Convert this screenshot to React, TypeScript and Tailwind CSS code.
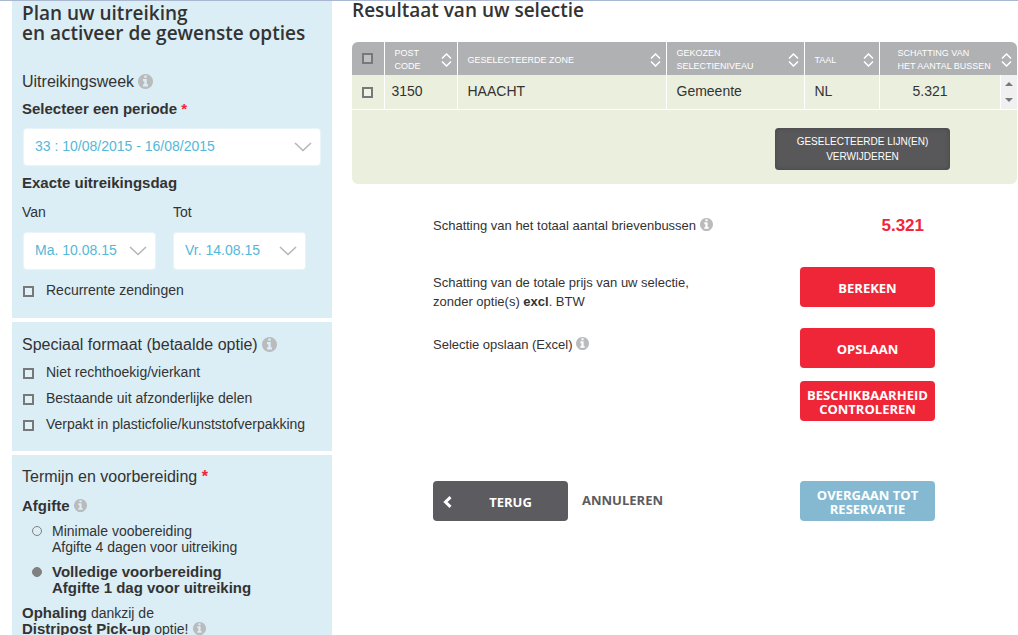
import { useState } from "react"
import type { ReactNode } from "react"

const checkboxClass = "appearance-none shrink-0 size-[11px] border-2 border-[#77787a] bg-white/20 checked:bg-[#77787a]"

const columns = [
  { label: ["POST", "CODE"], className: "w-[73px] pl-[10px]" },
  { label: ["GESELECTEERDE ZONE"], className: "pl-[10px]" },
  { label: ["GEKOZEN", "SELECTIENIVEAU"], className: "w-[138px] pl-[10px]" },
  { label: ["TAAL"], className: "w-[75px] pl-[10px]" },
  { label: ["SCHATTING VAN", "HET AANTAL BUSSEN"], className: "w-[138px] pl-[18px]" },
]

const formats = [
  "Niet rechthoekig/vierkant",
  "Bestaande uit afzonderlijke delen",
  "Verpakt in plasticfolie/kunststofverpakking",
]

const Info = ({ large = false }: { large?: boolean }) => (
  <svg viewBox="0 0 1536 1536" fill="currentColor" className={`mb-[2px] shrink-0 text-[#b9bbbd] ${large ? "size-[15px]" : "size-[13px]"}`}>
    <path d="M1024 1248v-160q0-14-9-23t-23-9h-96v-512q0-14-9-23t-23-9h-320q-14 0-23 9t-9 23v160q0 14 9 23t23 9h96v320h-96q-14 0-23 9t-9 23v160q0 14 9 23t23 9h448q14 0 23-9t9-23zm-128-896v-160q0-14-9-23t-23-9h-192q-14 0-23 9t-9 23v160q0 14 9 23t23 9h192q14 0 23-9t9-23zm640 416q0 209-103 385.5t-279.5 279.5-385.5 103-385.5-103-279.5-279.5-103-385.5 103-385.5 279.5-279.5 385.5-103 385.5 103 279.5 279.5 103 385.5z" />
  </svg>
)

const SortIcon = () => (
  <svg viewBox="0 0 11 14" className="w-[11px] h-[14px] shrink-0" fill="none" stroke="white" strokeWidth="1.5">
    <path d="M1 5.5 5.5 1 10 5.5M1 8.5 5.5 13 10 8.5" />
  </svg>
)

const Dropdown = ({ id, value, className }: { id: string, value: string, className: string }) => (
  <div className={`relative ${className}`}>
    <select id={id} className="appearance-none block w-full h-[38px] rounded-[3px] border border-[#e8f4f9] bg-white bg-clip-padding pl-[11px] pr-8 pb-[3px] text-[14px] text-[#54b8d8] outline-none">
      <option>{value}</option>
    </select>
    <svg viewBox="0 0 18 10" className="absolute right-[9px] top-[14px] w-[18px] h-[10px] pointer-events-none" fill="none" stroke="#b5b6b8" strokeWidth="1.6">
      <path d="M1 1 9 8.5 17 1" />
    </svg>
  </div>
)

const Check = ({ label }: { label: string }) => (
  <label className="flex items-center gap-3 h-[22px] pl-px text-[14px]">
    <input type="checkbox" className={`${checkboxClass} mt-[3px]`} />
    {label}
  </label>
)

const ActionButton = ({ children, className = "bg-[#ef2637]" }: { children: ReactNode, className?: string }) => (
  <button className={`w-[135px] h-10 rounded-[4px] pt-px font-['Open_Sans',sans-serif] text-[13px] leading-[14px] font-bold text-white ${className}`}>
    {children}
  </button>
)

const App = () => {
  const [prep, setPrep] = useState("full")

  return (
    <main className="flex h-screen overflow-hidden border-t border-[#a9b8d0] bg-white pl-3 font-['Liberation_Sans',Arial,sans-serif] text-[#333]">
      <aside className="w-[320px] shrink-0 leading-[22px]">
        <section className="bg-[#dbedf5] pl-[10px] pr-[11px] pt-[2px] pb-[17px]">
          <h2 className="font-['Open_Sans',sans-serif] text-[19px] leading-5 font-semibold whitespace-nowrap">
            Plan uw uitreiking<br />en activeer de gewenste opties
          </h2>
          <h3 className="mt-7 flex items-center gap-1 text-[16px] leading-[22px]">Uitreikingsweek <Info large /></h3>
          <label htmlFor="period" className="mt-[5px] block text-[15px] font-bold">
            Selecteer een periode <span className="text-[#ef2637]">*</span>
          </label>
          <Dropdown id="period" value="33 : 10/08/2015 - 16/08/2015" className="mt-2 ml-px" />
          <h4 className="mt-[6px] text-[15px] leading-[22px] font-bold">Exacte uitreikingsdag</h4>
          <div className="mt-[7px] flex gap-[17px] text-[14px]">
            <div>
              <label htmlFor="from" className="mb-[9px] block">Van</label>
              <Dropdown id="from" value="Ma. 10.08.15" className="w-[133px] ml-px" />
            </div>
            <div>
              <label htmlFor="to" className="mb-[9px] block">Tot</label>
              <Dropdown id="to" value="Vr. 14.08.15" className="w-[133px]" />
            </div>
          </div>
          <div className="mt-[9px]">
            <Check label="Recurrente zendingen" />
          </div>
        </section>

        <section className="mt-1 bg-[#dbedf5] px-[10px] pt-3 pb-4">
          <h3 className="flex items-center gap-1 text-[16px] leading-[22px]">Speciaal formaat (betaalde optie) <Info large /></h3>
          <div className="mt-[5px] flex flex-col gap-1">
            {formats.map(label => <Check key={label} label={label} />)}
          </div>
        </section>

        <section className="mt-1 bg-[#dbedf5] px-[10px] pt-[11px] pb-10">
          <h3 className="text-[16px] leading-[22px]">
            Termijn en voorbereiding <span className="font-bold text-[#ef2637]">*</span>
          </h3>
          <h4 className="mt-[7px] flex items-center gap-1 text-[15px] leading-[22px] font-bold">Afgifte <Info /></h4>
          <div className="mt-[6px] flex flex-col gap-[9px] pl-[10px] text-[14px] leading-4">
            <label className="flex gap-[10px]">
              <input type="radio" name="prep" checked={prep === "minimal"} onChange={() => setPrep("minimal")} className="appearance-none mt-[3px] size-[10px] rounded-full border border-[#808080] checked:bg-[#808080]" />
              <span>Minimale voobereiding<br />Afgifte 4 dagen voor uitreiking</span>
            </label>
            <label className="flex gap-[10px] text-[15px] font-bold">
              <input type="radio" name="prep" checked={prep === "full"} onChange={() => setPrep("full")} className="appearance-none mt-[3px] size-[10px] rounded-full border border-[#808080] checked:bg-[#808080]" />
              <span>Volledige voorbereiding<br />Afgifte 1 dag voor uitreiking</span>
            </label>
          </div>
          <p className="mt-[9px] text-[14px] leading-4">
            <b className="text-[15px]">Ophaling</b> dankzij de<br />
            <span className="flex items-center gap-1"><span><b className="text-[15px]">Distripost Pick-up</b> optie!</span> <Info /></span>
          </p>
        </section>
      </aside>

      <div className="ml-5 min-w-0 flex-1 pr-px">
        <h2 className="font-['Open_Sans',sans-serif] text-[19px] leading-[18px] font-semibold">Resultaat van uw selectie</h2>

        <div className="mt-[23px] overflow-hidden rounded-[6px] bg-[#ebefde]">
          <table className="w-full table-fixed border-collapse text-left">
            <thead className="bg-[#b0b1b3] text-[9px] leading-[13px] text-white">
              <tr className="h-[33px]">
                <th className="w-8 pl-[10px]">
                  <input type="checkbox" aria-label="Alles selecteren" className={`${checkboxClass} block`} />
                </th>
                {columns.map(col => (
                  <th key={col.label[0]} className={`border-l border-white pt-[3px] pb-0 pr-[5px] font-normal whitespace-nowrap ${col.className}`}>
                    <div className="flex items-center justify-between">
                      <span>{col.label.map(line => <span key={line} className="block">{line}</span>)}</span>
                      <SortIcon />
                    </div>
                  </th>
                ))}
              </tr>
            </thead>
            <tbody className="text-[14px]">
              <tr className="h-[34px]">
                <td className="pl-[10px]">
                  <input type="checkbox" aria-label="Selecteer HAACHT" className={`${checkboxClass} block`} />
                </td>
                <td className="border-l border-white pl-[7px] pb-[2px]">3150</td>
                <td className="border-l border-white pl-[10px] pb-[2px]">HAACHT</td>
                <td className="border-l border-white pl-[10px] pb-[2px]">Gemeente</td>
                <td className="border-l border-white pl-[10px] pb-[2px]">NL</td>
                <td className="border-l border-white p-0">
                  <div className="flex h-[34px] items-center justify-between pl-[33px]">
                    <span className="pb-[2px]">5.321</span>
                    <div className="flex h-full w-[17px] flex-col items-center justify-between border-l border-white bg-[#f0f0f0] py-[7px]">
                      <svg viewBox="0 0 8 4" className="w-2 h-1" fill="#77787a"><path d="M0 4 4 0 8 4Z" /></svg>
                      <svg viewBox="0 0 8 4" className="w-2 h-1" fill="#77787a"><path d="M0 0 4 4 8 0Z" /></svg>
                    </div>
                  </div>
                </td>
              </tr>
            </tbody>
          </table>
          <div className="flex justify-end border-t border-white pt-[18px] pr-[67px] pb-[14px]">
            <button className="h-[42px] w-[175px] rounded-[4px] bg-[#58585a] text-[10px] leading-[15px] text-white shadow-[inset_0_0_4px_#444446]">
              GESELECTEERDE LIJN(EN)<br />VERWIJDEREN
            </button>
          </div>
        </div>

        <div className="pt-[31px] pr-[82px] pl-[81px] text-[13px] leading-[19px]">
          <div className="flex h-5 items-center justify-between">
            <span className="flex items-center gap-1">Schatting van het totaal aantal brievenbussen <Info /></span>
            <strong className="pr-[11px] text-[17px] text-[#ef2637]">5.321</strong>
          </div>
          <div className="mt-8 flex justify-between">
            <p className="pt-[6px]">
              Schatting van de totale prijs van uw selectie,<br />zonder optie(s) <b>excl</b>. BTW
            </p>
            <ActionButton>BEREKEN</ActionButton>
          </div>
          <div className="mt-[17px] flex justify-between">
            <p className="flex items-center gap-1 self-start pt-[7px]">Selectie opslaan (Excel) <Info /></p>
            <div className="flex flex-col gap-[13px]">
              <ActionButton>OPSLAAN</ActionButton>
              <ActionButton>BESCHIKBAARHEID CONTROLEREN</ActionButton>
            </div>
          </div>
          <div className="mt-[60px] flex items-center">
            <ActionButton className="relative bg-[#5b5b60] pl-5">
              <svg viewBox="0 0 9 12" className="absolute left-[10px] top-[15px] h-3 w-[9px]" fill="none" stroke="white" strokeWidth="3">
                <path d="M7.5 1.2 2.5 6l5 4.8" />
              </svg>
              TERUG
            </ActionButton>
            <a href="#" className="ml-[14px] pb-[2px] font-['Open_Sans',sans-serif] text-[13px] font-bold text-[#5b5b60]">ANNULEREN</a>
            <div className="ml-auto">
              <ActionButton className="bg-[#84b9d1]">OVERGAAN TOT<br />RESERVATIE</ActionButton>
            </div>
          </div>
        </div>
      </div>
    </main>
  )
}

export default App
